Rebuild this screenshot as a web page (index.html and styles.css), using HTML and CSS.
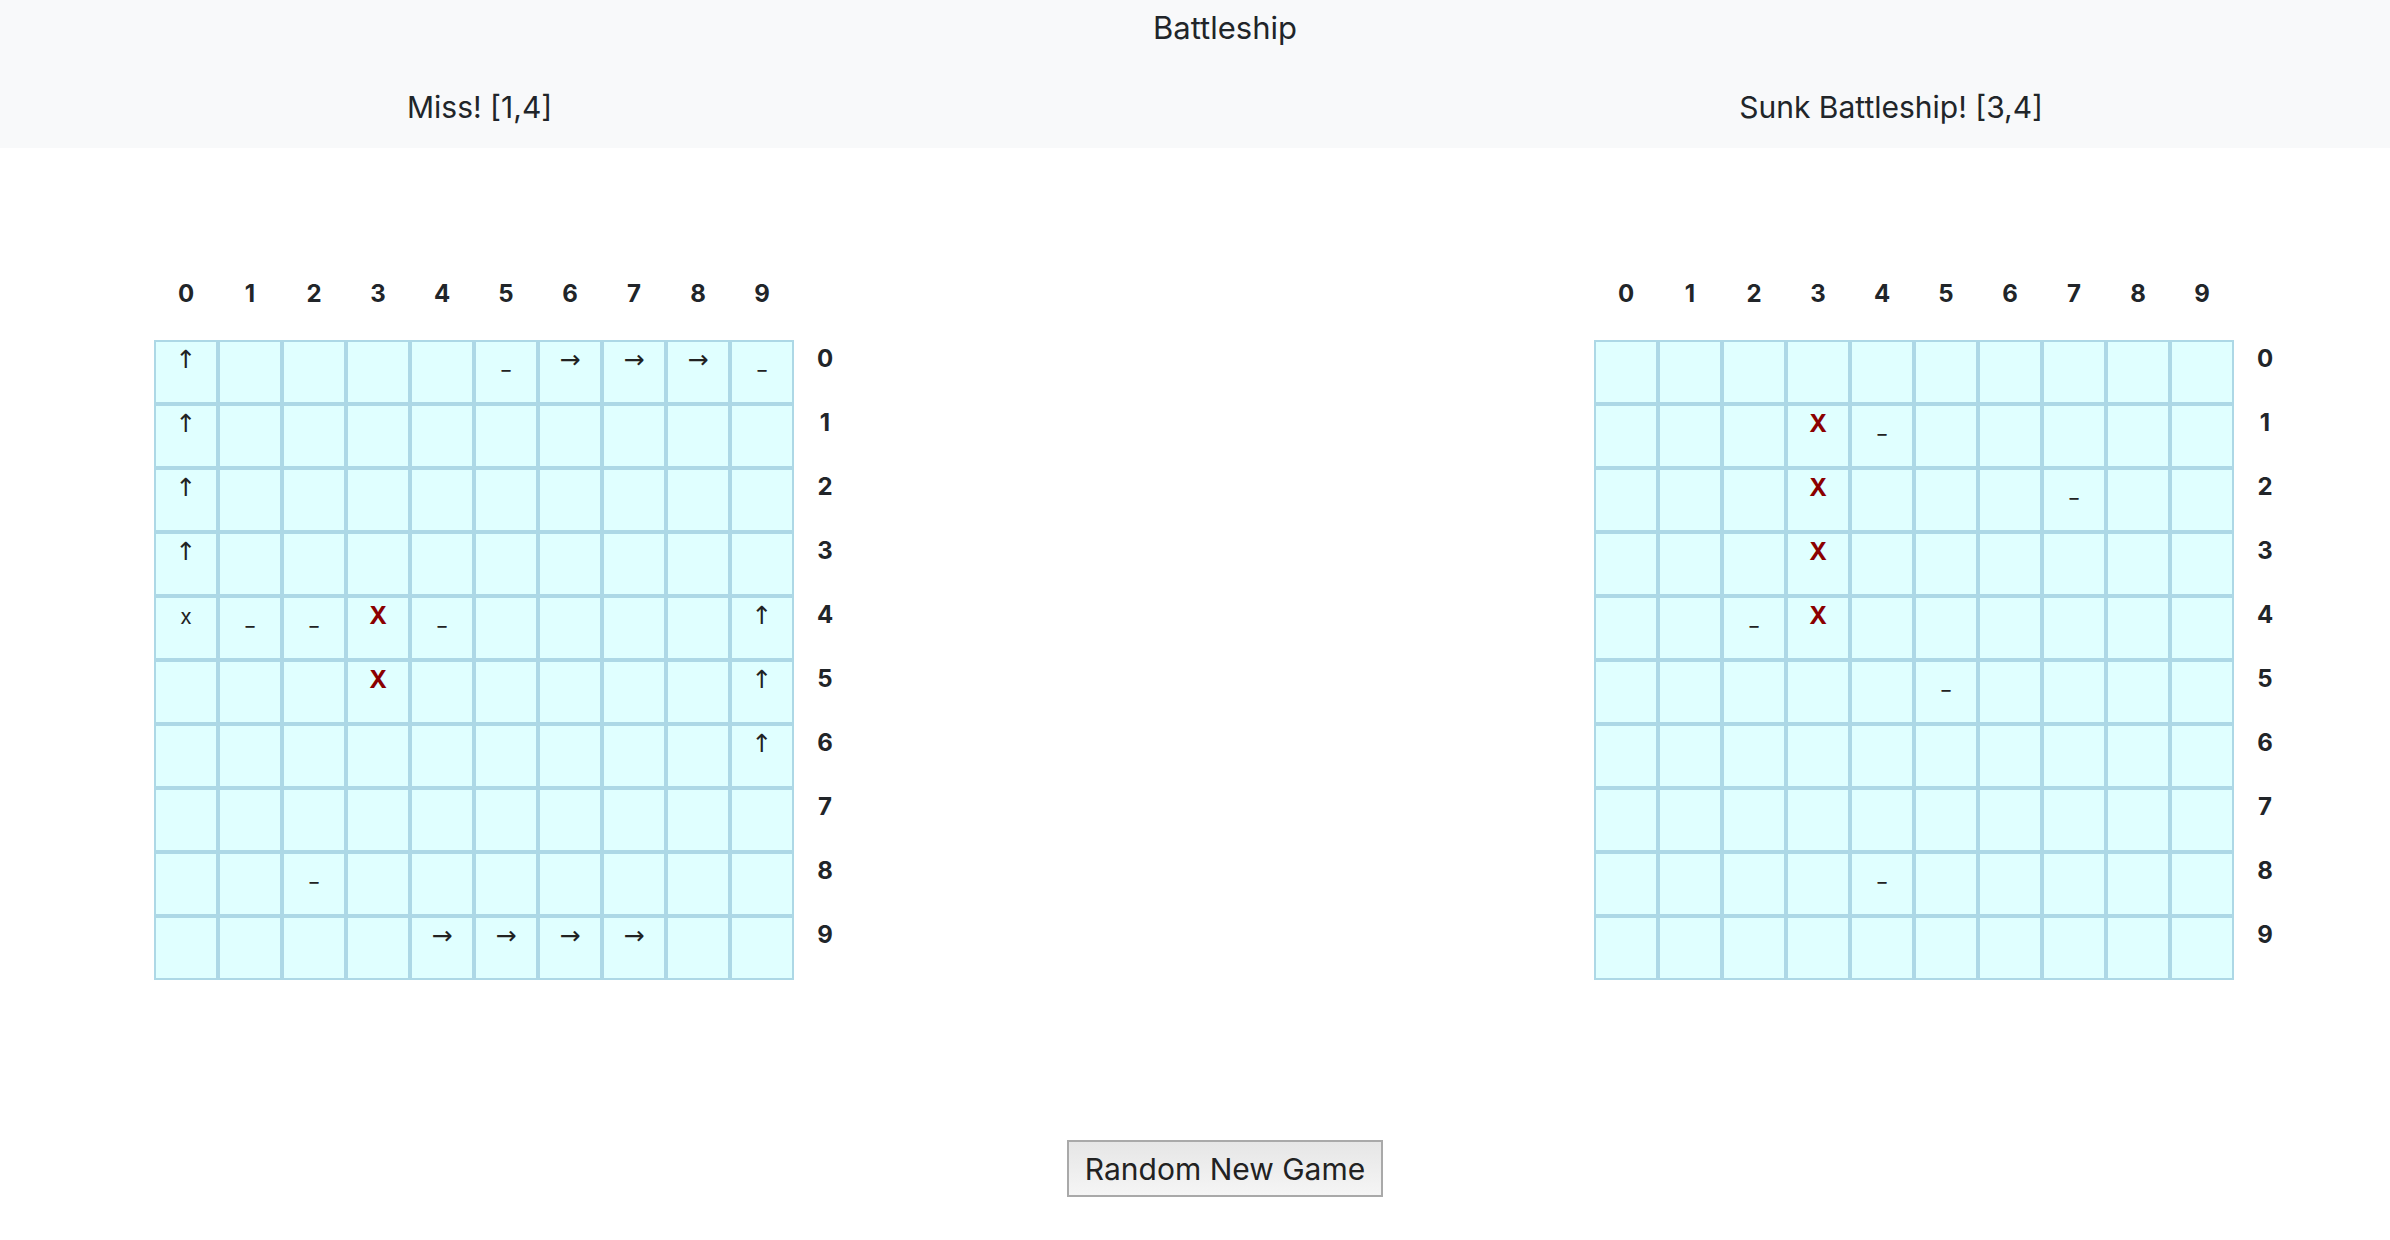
FILE: index.html
```html
<!DOCTYPE html>
<html lang="en">
<head>
<meta charset="utf-8">
<title>Battleship</title>
<link rel="stylesheet" href="styles.css">
</head>
<body>
<header class="topbar">
  <div class="title">Battleship</div>
  <div class="messages">
    <div class="msg">Miss! [1,4]</div>
    <div class="msg">Sunk Battleship! [3,4]</div>
  </div>
</header>

<main class="boards">
  <section class="board">
    <div class="col-labels"><span>0</span><span>1</span><span>2</span><span>3</span><span>4</span><span>5</span><span>6</span><span>7</span><span>8</span><span>9</span></div>
    <div class="row"><div class="cell">↑</div><div class="cell"></div><div class="cell"></div><div class="cell"></div><div class="cell"></div><div class="cell miss">_</div><div class="cell">→</div><div class="cell">→</div><div class="cell">→</div><div class="cell miss">_</div><span class="row-label">0</span></div>
    <div class="row"><div class="cell">↑</div><div class="cell"></div><div class="cell"></div><div class="cell"></div><div class="cell"></div><div class="cell"></div><div class="cell"></div><div class="cell"></div><div class="cell"></div><div class="cell"></div><span class="row-label">1</span></div>
    <div class="row"><div class="cell">↑</div><div class="cell"></div><div class="cell"></div><div class="cell"></div><div class="cell"></div><div class="cell"></div><div class="cell"></div><div class="cell"></div><div class="cell"></div><div class="cell"></div><span class="row-label">2</span></div>
    <div class="row"><div class="cell">↑</div><div class="cell"></div><div class="cell"></div><div class="cell"></div><div class="cell"></div><div class="cell"></div><div class="cell"></div><div class="cell"></div><div class="cell"></div><div class="cell"></div><span class="row-label">3</span></div>
    <div class="row"><div class="cell small-x">x</div><div class="cell miss">_</div><div class="cell miss">_</div><div class="cell hit">X</div><div class="cell miss">_</div><div class="cell"></div><div class="cell"></div><div class="cell"></div><div class="cell"></div><div class="cell">↑</div><span class="row-label">4</span></div>
    <div class="row"><div class="cell"></div><div class="cell"></div><div class="cell"></div><div class="cell hit">X</div><div class="cell"></div><div class="cell"></div><div class="cell"></div><div class="cell"></div><div class="cell"></div><div class="cell">↑</div><span class="row-label">5</span></div>
    <div class="row"><div class="cell"></div><div class="cell"></div><div class="cell"></div><div class="cell"></div><div class="cell"></div><div class="cell"></div><div class="cell"></div><div class="cell"></div><div class="cell"></div><div class="cell">↑</div><span class="row-label">6</span></div>
    <div class="row"><div class="cell"></div><div class="cell"></div><div class="cell"></div><div class="cell"></div><div class="cell"></div><div class="cell"></div><div class="cell"></div><div class="cell"></div><div class="cell"></div><div class="cell"></div><span class="row-label">7</span></div>
    <div class="row"><div class="cell"></div><div class="cell"></div><div class="cell miss">_</div><div class="cell"></div><div class="cell"></div><div class="cell"></div><div class="cell"></div><div class="cell"></div><div class="cell"></div><div class="cell"></div><span class="row-label">8</span></div>
    <div class="row"><div class="cell"></div><div class="cell"></div><div class="cell"></div><div class="cell"></div><div class="cell">→</div><div class="cell">→</div><div class="cell">→</div><div class="cell">→</div><div class="cell"></div><div class="cell"></div><span class="row-label">9</span></div>
  </section>

  <section class="board">
    <div class="col-labels"><span>0</span><span>1</span><span>2</span><span>3</span><span>4</span><span>5</span><span>6</span><span>7</span><span>8</span><span>9</span></div>
    <div class="row"><div class="cell"></div><div class="cell"></div><div class="cell"></div><div class="cell"></div><div class="cell"></div><div class="cell"></div><div class="cell"></div><div class="cell"></div><div class="cell"></div><div class="cell"></div><span class="row-label">0</span></div>
    <div class="row"><div class="cell"></div><div class="cell"></div><div class="cell"></div><div class="cell hit">X</div><div class="cell miss">_</div><div class="cell"></div><div class="cell"></div><div class="cell"></div><div class="cell"></div><div class="cell"></div><span class="row-label">1</span></div>
    <div class="row"><div class="cell"></div><div class="cell"></div><div class="cell"></div><div class="cell hit">X</div><div class="cell"></div><div class="cell"></div><div class="cell"></div><div class="cell miss">_</div><div class="cell"></div><div class="cell"></div><span class="row-label">2</span></div>
    <div class="row"><div class="cell"></div><div class="cell"></div><div class="cell"></div><div class="cell hit">X</div><div class="cell"></div><div class="cell"></div><div class="cell"></div><div class="cell"></div><div class="cell"></div><div class="cell"></div><span class="row-label">3</span></div>
    <div class="row"><div class="cell"></div><div class="cell"></div><div class="cell miss">_</div><div class="cell hit">X</div><div class="cell"></div><div class="cell"></div><div class="cell"></div><div class="cell"></div><div class="cell"></div><div class="cell"></div><span class="row-label">4</span></div>
    <div class="row"><div class="cell"></div><div class="cell"></div><div class="cell"></div><div class="cell"></div><div class="cell"></div><div class="cell miss">_</div><div class="cell"></div><div class="cell"></div><div class="cell"></div><div class="cell"></div><span class="row-label">5</span></div>
    <div class="row"><div class="cell"></div><div class="cell"></div><div class="cell"></div><div class="cell"></div><div class="cell"></div><div class="cell"></div><div class="cell"></div><div class="cell"></div><div class="cell"></div><div class="cell"></div><span class="row-label">6</span></div>
    <div class="row"><div class="cell"></div><div class="cell"></div><div class="cell"></div><div class="cell"></div><div class="cell"></div><div class="cell"></div><div class="cell"></div><div class="cell"></div><div class="cell"></div><div class="cell"></div><span class="row-label">7</span></div>
    <div class="row"><div class="cell"></div><div class="cell"></div><div class="cell"></div><div class="cell"></div><div class="cell miss">_</div><div class="cell"></div><div class="cell"></div><div class="cell"></div><div class="cell"></div><div class="cell"></div><span class="row-label">8</span></div>
    <div class="row"><div class="cell"></div><div class="cell"></div><div class="cell"></div><div class="cell"></div><div class="cell"></div><div class="cell"></div><div class="cell"></div><div class="cell"></div><div class="cell"></div><div class="cell"></div><span class="row-label">9</span></div>
  </section>
</main>

<div class="actions">
  <button class="new-game" type="button">Random New Game</button>
</div>
</body>
</html>
```

FILE: styles.css
```css
html, body {
  margin: 0;
  padding: 0;
  background: #ffffff;
}

body {
  font-family: Inter, "Liberation Sans", "DejaVu Sans", sans-serif;
  color: #212529;
}

.topbar {
  background: #f8f9fa;
  height: 148px;
  box-sizing: border-box;
  padding: 4px 0 0 60px;
}

.title {
  font-size: 31px;
  line-height: 48px;
  text-align: center;
}

.messages {
  display: flex;
  justify-content: space-between;
  margin-top: 31px;
  padding: 0 347px 0 347px;
}

.msg {
  font-size: 30px;
  line-height: 48px;
}

.boards {
  display: flex;
  justify-content: space-between;
  padding: 0 94px 0 154px;
  margin-top: 128px;
}

.board {
  display: flex;
  flex-direction: column;
  width: 702px;
}

.col-labels {
  display: flex;
  height: 36px;
  margin-bottom: 28px;
}

.col-labels span {
  width: 64px;
  text-align: center;
  font-size: 24px;
  font-weight: 700;
  line-height: 36px;
}

.row {
  display: flex;
}

.cell {
  width: 64px;
  height: 64px;
  box-sizing: border-box;
  border: 2px solid #add8e6;
  background: #e0ffff;
  text-align: center;
  font-family: "DejaVu Sans", sans-serif;
  font-size: 25px;
  line-height: 30px;
  padding-top: 3px;
  color: #222222;
}

.cell.miss {
  font-family: Inter, sans-serif;
  font-size: 20px;
  padding-top: 6px;
}

.cell.small-x {
  font-family: Inter, sans-serif;
  font-size: 21px;
  padding-top: 4px;
}

.cell.hit {
  font-family: Inter, sans-serif;
  color: #8b0000;
  font-weight: 700;
  font-size: 24px;
  padding-top: 3px;
}

.row-label {
  width: 62px;
  text-align: center;
  font-size: 24px;
  font-weight: 700;
  line-height: 36px;
  padding-top: 1px;
}

.actions {
  padding-left: 60px;
  margin-top: 160px;
  text-align: center;
}

.new-game {
  font-family: Inter, "Liberation Sans", sans-serif;
  font-size: 30px;
  color: #222222;
  height: 57px;
  padding: 0 16px;
  border: 2px solid #a9a9a9;
  border-radius: 0;
  background: linear-gradient(#e6e6e6, #f5f5f5);
}
```
